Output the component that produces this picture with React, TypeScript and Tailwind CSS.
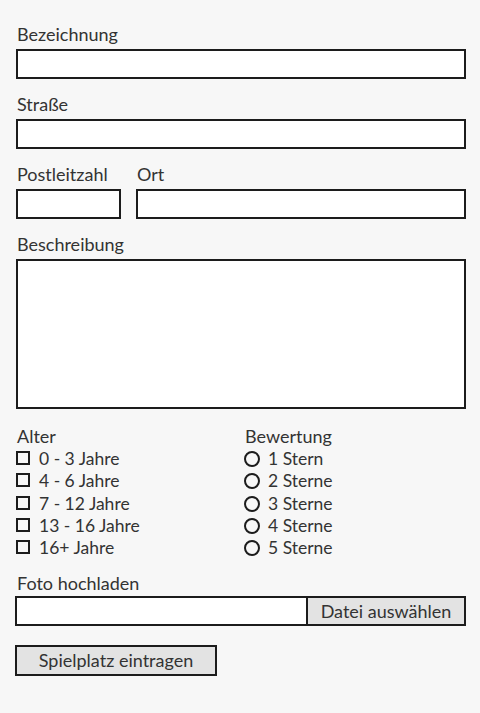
const ALTER = ["0 - 3 Jahre", "4 - 6 Jahre", "7 - 12 Jahre", "13 - 16 Jahre", "16+ Jahre"];
const STERNE = ["1 Stern", "2 Sterne", "3 Sterne", "4 Sterne", "5 Sterne"];

const inputCls = "block h-[30px] w-full border-2 border-[#1c1c1c] bg-white";

function Field({ label, className = "" }: { label: string; className?: string }) {
	return (
		<label className={`block ${className}`}>
			<span className="block h-6 leading-6 pl-px">{label}</span>
			<input type="text" className={`mt-[3px] ${inputCls}`} />
		</label>
	);
}

export default function App() {
	return (
		<div
			className="min-h-[713px] bg-[#f7f7f7] px-4 pt-[22px] text-[18px] text-[#333]"
			style={{ fontFamily: "Lato, 'Noto Sans', sans-serif" }}
		>
			<form className="w-[450px]">
				<Field label="Bezeichnung" />
				<Field label="Straße" className="mt-[13px]" />
				<div className="mt-[13px] flex gap-[15px]">
					<Field label="Postleitzahl" className="w-[105px] shrink-0" />
					<Field label="Ort" className="flex-1" />
				</div>
				<label className="mt-[13px] block">
					<span className="block h-6 leading-6 pl-px">Beschreibung</span>
					<textarea className="mt-[3px] block h-[150px] w-full resize-none border-2 border-[#1c1c1c] bg-white" />
				</label>

				<div className="mt-[15px] grid grid-cols-2">
					<fieldset>
						<legend className="h-6 leading-6 pl-px">Alter</legend>
						{ALTER.map((a) => (
							<label key={a} className="flex h-[22.3px] items-center text-[17.5px]">
								<input
									type="checkbox"
									className="-mt-0.5 h-[14px] w-[14px] appearance-none border-2 border-[#1c1c1c] bg-[#f7f7f7]"
								/>
								<span className="ml-[9px] leading-[22px]">{a}</span>
							</label>
						))}
					</fieldset>
					<fieldset className="pl-[3px]">
						<legend className="h-6 leading-6 pl-px">Bewertung</legend>
						{STERNE.map((s) => (
							<label key={s} className="flex h-[22.3px] items-center text-[17.5px]">
								<input
									type="radio"
									name="bewertung"
									className="h-[16px] w-[16px] appearance-none rounded-full border-2 border-[#1c1c1c] bg-[#f7f7f7]"
								/>
								<span className="ml-[8px] leading-[22px]">{s}</span>
							</label>
						))}
					</fieldset>
				</div>

				<div className="mt-[12px]">
					<span className="block h-6 leading-6 pl-px">Foto hochladen</span>
					<div className="mt-px flex h-[30px] w-[451px] -ml-px border-2 border-[#1c1c1c] bg-white">
						<div className="flex-1" />
						<button
							type="button"
							className="w-[158px] border-l-2 border-[#1c1c1c] bg-[#e3e3e3] text-center"
						>
							Datei auswählen
						</button>
					</div>
				</div>

				<button
					type="button"
					className="mt-[19px] -ml-px h-[31px] w-[202px] border-2 border-[#1c1c1c] bg-[#e3e3e3] text-center"
				>
					Spielplatz eintragen
				</button>
			</form>
		</div>
	);
}
